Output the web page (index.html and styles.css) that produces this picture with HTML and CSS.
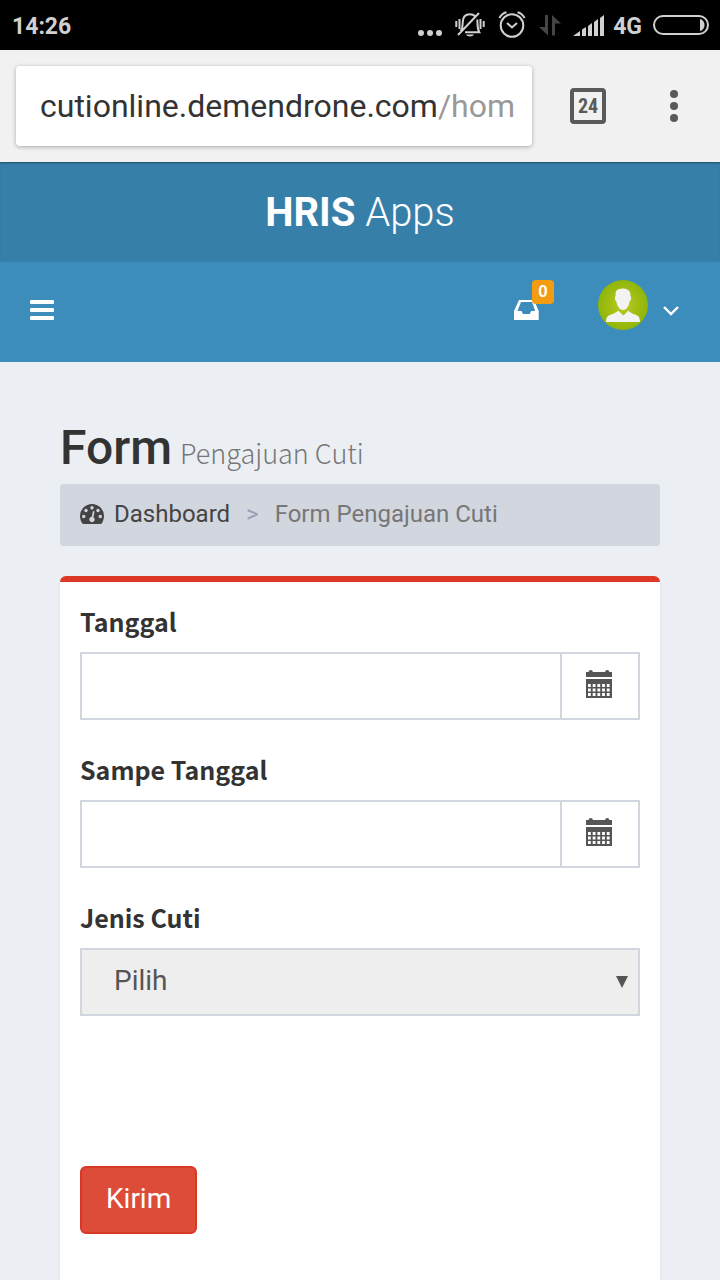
FILE: index.html
```html
<!DOCTYPE html>
<html lang="id">
<head>
<meta charset="utf-8">
<meta name="viewport" content="width=device-width, initial-scale=1">
<title>HRIS Apps - Form Pengajuan Cuti</title>
<link rel="stylesheet" href="styles.css">
</head>
<body>
<div class="status-bar">
  <span class="clock">14:26</span>
  <div class="status-icons">
    <svg class="icon-more" width="26" height="30" viewBox="0 0 26 30" fill="#d0d0d0" aria-hidden="true"><circle cx="4" cy="23" r="3"/><circle cx="13" cy="23" r="3"/><circle cx="22" cy="23" r="3"/></svg>
    <svg class="icon-bell" width="30" height="30" viewBox="0 0 30 30" fill="none" stroke="#d0d0d0" stroke-width="2" aria-hidden="true"><path d="M5.500 21.500C8 18 7.700 15 7.700 12.500C7.700 7 10 4.200 15 4.200C17 4.200 18.800 4.800 20 6M22.300 9.500C22.800 14 21.800 18 24.300 22.300H10M3 25L24 3M1.300 11v6M4.500 9v10M25.500 9v10M28.700 11v6"/><path d="M11 24.500h8c-1 2.500-7 2.500-8 0z" fill="#d0d0d0" stroke="none"/></svg>
    <svg class="icon-alarm" width="28" height="30" viewBox="0 0 28 30" fill="none" stroke="#d0d0d0" stroke-width="2" aria-hidden="true"><circle cx="14" cy="15.500" r="11.300"/><path d="M9 13l5 4.500 5-4.500M1.500 8C3 5 5.500 3 8.500 2.300M26.500 8C25 5 22.500 3 19.500 2.300"/></svg>
    <svg class="icon-data" width="22" height="30" viewBox="0 0 22 30" fill="#454545" aria-hidden="true"><path d="M6 5h3v20.500L0 17h6zM13 25.500V5l9 8.500h-6v12z"/></svg>
    <svg class="icon-signal" width="32" height="30" viewBox="0 0 32 30" fill="#d0d0d0" aria-hidden="true"><path d="M0 26l7-5v5zM9 19.500l4-2.500v9H9zM15 16l4-3v13h-4zM21 12l4-3v17h-4zM27 8l4-3v21h-4z"/></svg>
    <span class="network">4G</span>
    <svg class="icon-battery" width="56" height="30" viewBox="0 0 56 30" fill="none" stroke="#d0d0d0" stroke-width="2" aria-hidden="true"><rect x="1" y="6" width="54" height="18" rx="9"/><path d="M47 9c6 1 6 11 0 12z" fill="#d0d0d0" stroke="none"/></svg>
  </div>
</div>

<div class="browser-bar">
  <div class="address"><span>cutionline.demendrone.com</span><span class="address-path">/hom</span></div>
  <button class="tabs" type="button" aria-label="24 tab">24</button>
  <button class="browser-menu" type="button" aria-label="Menu browser">
    <svg width="8" height="32" viewBox="0 0 8 32" fill="#5a5a5a"><circle cx="4" cy="4" r="4"/><circle cx="4" cy="16" r="4"/><circle cx="4" cy="28" r="4"/></svg>
  </button>
</div>

<header>
  <a class="brand" href="#"><b>HRIS</b> Apps</a>
  <nav class="navbar">
    <button class="nav-toggle" type="button" aria-label="Menu">
      <svg width="24" height="20" viewBox="0 0 24 20" fill="#fff"><rect width="24" height="4" rx="1"/><rect y="8" width="24" height="4" rx="1"/><rect y="16" width="24" height="4" rx="1"/></svg>
    </button>
    <div class="nav-actions">
      <a class="inbox" href="#" aria-label="Kotak masuk">
        <svg width="26" height="20" viewBox="0 0 26 20" fill="#fff"><path fill-rule="evenodd" d="M5 0h15l4.700 11v9H0V11zM7 2L3.500 11H7.500l1.500 3h6.700l1.500-3h4L18 2z"/></svg>
        <span class="badge">0</span>
      </a>
      <button class="user" type="button" aria-label="Pengguna">
        <svg width="50" height="50" viewBox="0 0 50 50">
          <defs><radialGradient id="green"><stop offset="0" stop-color="#bcc922"/><stop offset="1" stop-color="#8fb508"/></radialGradient></defs>
          <circle cx="25" cy="25" r="25" fill="url(#green)"/>
          <path fill="#f3f3f3" d="M17.700 16c-.5-4 .8-6.500 3.300-6.700 2-1.200 6-.9 8 .2 2.800 1 3.700 3.500 3.400 6.500 1.200.5 1 4.500-.9 5.800-.3 2-1 4-2 5.500C28.500 29 27 30 25.200 30s-3.500-1-4.700-2.700c-1-1.500-1.700-3.500-2-5.500-1.800-1.500-2-5.300-.8-5.800z"/>
          <path fill="#f3f3f3" d="M20 30.500l5.500 5 5-5c2 3.500 8 3.500 10 6 .9 1 1.500 3 1.500 5.500H8c0-2.500.6-4.500 1.500-5.500 2-2.500 8.500-2.500 10.500-6z"/>
        </svg>
        <svg width="18" height="12" viewBox="0 0 18 12" fill="none" stroke="#fff" stroke-width="2.400"><path d="M2 2l7 7 7-7"/></svg>
      </button>
    </div>
  </nav>
</header>

<main>
  <h1>Form <small>Pengajuan Cuti</small></h1>
  <ol class="breadcrumb">
    <li><a href="#"><svg width="24" height="20" viewBox="0 0 24 20"><path fill="#444" d="M12 0a12 12 0 0 1 12 12c0 2.500-.8 5-2 7q-.5 1-1.500 1h-17Q2.500 20 2 19c-1.200-2-2-4.500-2-7A12 12 0 0 1 12 0z"/><g fill="#d2d6de"><circle cx="3.700" cy="12.500" r="1.700"/><circle cx="6" cy="6.500" r="1.700"/><circle cx="12" cy="3.800" r="1.700"/><circle cx="18" cy="6.500" r="1.700"/><circle cx="20.300" cy="12.500" r="1.700"/><path d="M13 7l1.600.4-1.200 5.800a2.700 2.700 0 1 1-1.700-.4z"/></g></svg>Dashboard</a></li>
    <li>Form Pengajuan Cuti</li>
  </ol>

  <form class="card">
    <div class="field">
      <label for="start">Tanggal</label>
      <div class="input-group">
        <input id="start" type="text">
        <button class="addon" type="button" aria-label="Pilih tanggal">
          <svg width="26" height="28" viewBox="0 0 26 28"><path fill="#555" d="M0 2h2.500Q3 0 4.700 0T7 2h12q.5-2 2.200-2t2.300 2H26v5H0zM0 9h26v19H0z"/><path stroke="#fff" stroke-width="2.800" stroke-dasharray="2.800 1.900" d="M2 15.500h22M2 20h22M2 24.500h22"/></svg>
        </button>
      </div>
    </div>
    <div class="field">
      <label for="end">Sampe Tanggal</label>
      <div class="input-group">
        <input id="end" type="text">
        <button class="addon" type="button" aria-label="Pilih sampai tanggal">
          <svg width="26" height="28" viewBox="0 0 26 28"><path fill="#555" d="M0 2h2.500Q3 0 4.700 0T7 2h12q.5-2 2.200-2t2.300 2H26v5H0zM0 9h26v19H0z"/><path stroke="#fff" stroke-width="2.800" stroke-dasharray="2.800 1.900" d="M2 15.500h22M2 20h22M2 24.500h22"/></svg>
        </button>
      </div>
    </div>
    <div class="field">
      <label for="type">Jenis Cuti</label>
      <div class="select">
        <select id="type"><option>Pilih</option></select>
        <svg class="caret" width="12" height="12" viewBox="0 0 12 12" fill="#555" aria-hidden="true"><path d="M0 0h12L6 12z"/></svg>
      </div>
    </div>
    <button class="submit" type="submit">Kirim</button>
  </form>
</main>
</body>
</html>
```
FILE: styles.css
```css
* { box-sizing: border-box; }

body {
  margin: 0;
  min-height: 100vh;
  display: flex;
  flex-direction: column;
  background: #ebeff4;
  color: #333;
  font-family: Roboto, "Liberation Sans", sans-serif;
  font-size: 28px;
}

button, input, select { font: inherit; color: inherit; }
button { border: 0; padding: 0; background: none; }
a { color: inherit; text-decoration: none; }
svg { display: block; flex: none; }

.status-bar {
  display: flex;
  align-items: center;
  justify-content: space-between;
  height: 50px;
  padding: 0 11px 0 12px;
  background: #000;
  color: #d0d0d0;
  font-size: 23px;
  font-weight: 700;
}
.clock, .network { line-height: 30px; padding-top: 4px; }
.status-icons { display: flex; align-items: center; }
.icon-bell { margin-left: 12px; }
.icon-alarm { margin-left: 13px; }
.icon-data { margin-left: 13px; }
.icon-signal { margin-left: 12px; }
.network { margin-left: 8px; }
.icon-battery { margin-left: 11px; }

.browser-bar {
  display: flex;
  align-items: center;
  height: 112px;
  padding: 0 42px 0 16px;
  background: #f1f1f1;
}
.address {
  flex: 1;
  height: 80px;
  padding: 0 16px 0 24px;
  overflow: hidden;
  border-radius: 4px;
  background: #fff;
  box-shadow: 0 1px 4px rgba(0, 0, 0, .3);
  font-size: 32px;
  line-height: 80px;
  white-space: nowrap;
}
.address-path { color: #999; }
.tabs {
  width: 36px;
  height: 36px;
  margin: 0 64px 0 38px;
  border: 4px solid #5a5a5a;
  border-radius: 4px;
  color: #5a5a5a;
  font-family: "Roboto Condensed", Roboto, sans-serif;
  font-size: 20px;
  font-weight: 700;
  line-height: 28px;
}

.brand {
  display: block;
  height: 100px;
  padding-top: 1px;
  background: #367fa9;
  box-shadow: inset 0 2px 2px -1px rgba(0, 0, 0, .4);
  color: #fff;
  font-size: 40px;
  font-weight: 300;
  line-height: 100px;
  text-align: center;
}
.brand b { font-weight: 700; }
.navbar {
  display: flex;
  align-items: flex-start;
  justify-content: space-between;
  height: 100px;
  padding: 18px 40px 0 30px;
  background: #3c8dbc;
}
.nav-toggle { padding-top: 20px; }
.nav-actions { display: flex; align-items: flex-start; gap: 44px; }
.inbox { position: relative; padding: 20px 14px 0 0; }
.badge {
  position: absolute;
  top: 0;
  right: 0;
  width: 22px;
  height: 24px;
  border-radius: 4px;
  background: #f39c12;
  color: #fff;
  font-family: "Noto Sans CJK JP", sans-serif;
  font-size: 16px;
  font-weight: 700;
  line-height: 20px;
  text-align: center;
}
.user { display: flex; align-items: center; gap: 14px; }
.user svg + svg { margin-top: 12px; }

main {
  flex: 1;
  display: flex;
  flex-direction: column;
  padding: 54px 60px 0;
}
h1 {
  margin: 0;
  height: 68px;
  font-size: 48px;
  font-weight: 500;
  line-height: 64px;
  white-space: nowrap;
}
h1 small {
  color: #777;
  font-family: "Noto Sans CJK JP", sans-serif;
  font-size: 27px;
  font-weight: 300;
  line-height: 40px;
  margin-left: -4px;
}
.breadcrumb {
  display: flex;
  align-items: center;
  height: 62px;
  margin: 0 0 30px;
  padding: 0 20px 2px;
  border-radius: 4px;
  background: #d2d6de;
  color: #777;
  font-size: 24px;
  line-height: 30px;
  list-style: none;
}
.breadcrumb a { display: flex; align-items: center; gap: 10px; color: #444; }
.breadcrumb li + li::before {
  content: ">";
  margin: 0 16px;
  color: #98a0b8;
}

.card {
  flex: 1;
  padding: 20px 20px 46px;
  border-top: 6px solid #dd3826;
  border-radius: 6px 6px 0 0;
  background: #fff;
  box-shadow: 0 2px 2px rgba(0, 0, 0, .1);
}
.field { margin-bottom: 30px; }
label {
  display: block;
  margin-bottom: 12px;
  font-family: "Noto Sans CJK JP", sans-serif;
  font-size: 25px;
  font-weight: 700;
  line-height: 38px;
}
.input-group { display: flex; height: 68px; }
.input-group input {
  flex: 1;
  min-width: 0;
  padding: 0 24px;
  border: 2px solid #d2d6de;
  border-right: 0;
  border-radius: 0;
  background: #fff;
}
.addon {
  display: flex;
  align-items: center;
  justify-content: center;
  width: 80px;
  padding: 0 2px 4px 0;
  border: 2px solid #d2d6de;
}
.select { position: relative; }
select {
  display: block;
  width: 100%;
  height: 68px;
  padding: 0 32px 4px;
  appearance: none;
  border: 2px solid #d2d6de;
  border-radius: 0;
  background: #eee;
  color: #555;
}
.caret { position: absolute; top: 28px; right: 12px; pointer-events: none; }
.submit {
  height: 68px;
  margin-top: 120px;
  padding: 0 24px 4px;
  border: 2px solid #d73925;
  border-radius: 6px;
  background: #dd4b39;
  color: #fff;
}
```
